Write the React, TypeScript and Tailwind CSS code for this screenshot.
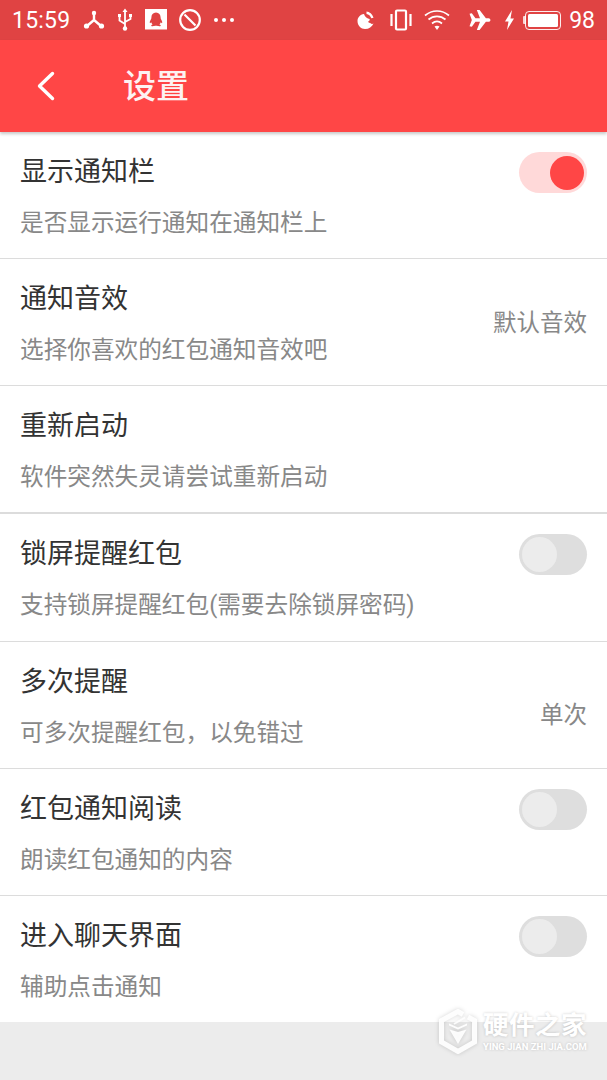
const FONT = "font-['Roboto','Noto_Sans_CJK_SC',sans-serif]";

function Toggle({ on }: { on?: boolean }) {
  if (on) {
    return (
      <div className="w-[68px] h-[41px] rounded-full bg-[#ffd9d9] flex items-center justify-end pr-[3px] shrink-0">
        <div className="size-[34px] rounded-full bg-[#ff4646]" />
      </div>
    );
  }
  return (
    <div className="w-[68px] h-[41px] rounded-full bg-[#dedede] flex items-center pl-[3px] shrink-0">
      <div className="size-[35px] rounded-full bg-[#ececec]" />
    </div>
  );
}

function SettingRow({
  title,
  desc,
  toggle,
  value,
  valueClass,
  tall,
  heavy,
  last,
}: {
  title: string;
  desc: string;
  toggle?: "on" | "off";
  value?: string;
  valueClass?: string;
  tall?: boolean;
  heavy?: boolean;
  last?: boolean;
}) {
  return (
    <div
      className={`relative pl-5 pr-5 ${last ? "h-[126px]" : tall ? "h-[128px]" : "h-[127px]"} ${
        last ? "" : heavy ? "border-b-2 border-[#dcdcdc]" : "border-b border-[#dcdcdc]"
      }`}
    >
      <p className="pt-[21px] text-[27px] leading-[38px] text-[#333333]">{title}</p>
      <p className="pt-[15px] text-[23.65px] leading-[34px] text-[#888888]">{desc}</p>
      {toggle && (
        <div className="absolute right-5 top-[20px]">
          <Toggle on={toggle === "on"} />
        </div>
      )}
      {value && (
        <span className={`absolute right-5 text-[23.5px] leading-[34px] text-[#888888] ${valueClass}`}>
          {value}
        </span>
      )}
    </div>
  );
}

function StatusBar() {
  return (
    <div className="h-10 bg-[#e04343] flex items-center justify-between pl-3 pr-3 text-white">
      <div className="flex items-center">
        <span className="text-[23px] leading-none tracking-[0.2px] font-['Roboto',sans-serif]">15:59</span>
        {/* hotspot tree */}
        <svg width="22" height="22" viewBox="0 0 22 22" className="ml-[13px]" fill="none" stroke="white" strokeWidth="2.4">
          <path d="M11 4v8M11 11l-7 6M11 11l7 6" />
          <circle cx="11" cy="4" r="2.2" fill="white" stroke="none" />
          <circle cx="3.5" cy="17" r="2.6" fill="white" stroke="none" />
          <circle cx="18.5" cy="17" r="2.6" fill="white" stroke="none" />
        </svg>
        {/* usb */}
        <svg width="16" height="24" viewBox="0 0 16 24" className="ml-[12px]" fill="none" stroke="white" strokeWidth="1.8">
          <path d="M8 3v19M2.5 8v4.5L8 16M13.5 8v3L8 14" />
          <path d="M8 0.5l2.5 3.5h-5z" fill="white" stroke="none" />
          <circle cx="8" cy="20.5" r="2.2" fill="white" stroke="none" />
          <rect x="1" y="6" width="3" height="3" fill="white" stroke="none" />
          <rect x="12" y="6" width="3" height="3" fill="white" stroke="none" />
        </svg>
        {/* qq */}
        <svg width="22" height="22" viewBox="0 0 22 22" className="ml-[12px]">
          <path
            fillRule="evenodd"
            fill="white"
            d="M0 0h22v20.5H0zM11 3.500c-3 0-4.600 2.200-4.600 5 0 .9-.2 1.500-.7 2.300-.7 1.200-1.200 2.600-.8 3.200.3.4.9-.1 1.300-.7.300 1 .8 1.700 1.400 2.200-.9.300-1.500.7-1.300 1.200.2.500 1.600.6 2.800.4.700-.1 1.200-.3 1.900-.3s1.200.2 1.900.3c1.200.2 2.600.1 2.800-.4.2-.5-.4-.9-1.300-1.200.6-.5 1.100-1.200 1.400-2.200.4.600 1 1.100 1.300.7.400-.6-.1-2-.8-3.200-.5-.8-.7-1.400-.7-2.300 0-2.800-1.600-5-4.600-5z"
          />
        </svg>
        {/* do not disturb */}
        <svg width="24" height="24" viewBox="0 0 24 24" className="ml-[11px]" fill="none" stroke="white" strokeWidth="2.2">
          <circle cx="12" cy="12" r="9.8" />
          <path d="M6.500 6.500l11 11" />
        </svg>
        {/* more */}
        <div className="ml-[12px] flex gap-[4px]">
          <div className="size-[4px] rounded-full bg-white" />
          <div className="size-[4px] rounded-full bg-white" />
          <div className="size-[4px] rounded-full bg-white" />
        </div>
      </div>
      <div className="flex items-center">
        {/* moon-like badge */}
        <svg width="20" height="20" viewBox="0 0 20 20">
          <path
            fill="white"
            d="M8 4C4 4.500 1.500 7.500 1.500 11c0 4.500 3.500 8 7.500 8 4 0 7-2 8.500-5.500-1 .7-2.500.5-3.200-.6-1 .2-2.100-.4-2.300-1.400 1.300-.2 2-1.300 1.600-2.500C11.500 8.800 8.800 7 8 4zM10.500 1.500c3 .2 6 2.700 7 6.200l-2.200.5c-.7-2.400-2.700-4-4.800-4.300z"
          />
        </svg>
        {/* vibrate */}
        <svg width="22" height="24" viewBox="0 0 22 24" className="ml-[14px]" fill="none" stroke="white" strokeWidth="2.2">
          <rect x="6" y="2.500" width="10" height="19" rx="1" />
          <path d="M1.500 6v12M20.500 6v12" />
        </svg>
        {/* wifi */}
        <svg width="26" height="22" viewBox="0 0 26 22" className="ml-[12px]" fill="none" stroke="white" strokeWidth="1.7">
          <path d="M1 6.500C8 .5 18 .5 25 6.500M4.500 10.500c5-4.300 12-4.300 17 0M8 14.500c3-2.500 7-2.500 10 0" />
          <path d="M10.500 17.500c1.500-1 3.500-1 5 0L13 21z" fill="white" stroke="none" />
        </svg>
        {/* airplane */}
        <svg width="24" height="20" viewBox="0 0 24 22" className="ml-[18px]">
          <path
            fill="white"
            d="M0.500 4l2.500-.5 4 5.500h5L8.500 0h3l7 9h3c1 0 2 1 2 2s-1 2-2 2h-3l-7 9h-3l3.500-9H7l-4 5.500L.5 18 3 11z"
          />
        </svg>
        {/* charging bolt */}
        <svg width="11" height="20" viewBox="0 0 11 20" className="ml-[12px]">
          <path fill="white" d="M8 0L1 11.500h3.500L3 20l7-11.500H6.500z" />
        </svg>
        {/* battery */}
        <div className="ml-[8px] flex items-center">
          <div className="w-[3px] h-[8px] bg-white rounded-l-[1px] opacity-80" />
          <div className="w-[36px] h-[19px] rounded-[4px] border-[1.5px] border-white/90 p-[2px] ml-[-1px]">
            <div className="size-full rounded-[1.5px] bg-white" />
          </div>
        </div>
        <span className="ml-[8px] text-[23px] leading-none font-['Roboto',sans-serif]">98</span>
      </div>
    </div>
  );
}

export default function App() {
  return (
    <div className={`relative w-[607px] h-[1080px] overflow-hidden bg-[#ececec] ${FONT}`}>
      <StatusBar />
      <div className="relative z-10 h-[92px] bg-[#ff4646] flex items-center shadow-[0_2px_3px_rgba(0,0,0,0.22)]">
        <svg width="20" height="32" viewBox="0 0 20 32" className="ml-[36px]" fill="none" stroke="white" strokeWidth="3.4" strokeLinecap="round" strokeLinejoin="round">
          <path d="M16.500 3.500L3.500 16l13 12.500" />
        </svg>
        <h1 className="ml-[67px] text-[33px] leading-none font-medium text-[#fdf2f2]">设置</h1>
      </div>
      <div className="bg-white">
        <SettingRow title="显示通知栏" desc="是否显示运行通知在通知栏上" toggle="on" />
        <SettingRow title="通知音效" desc="选择你喜欢的红包通知音效吧" value="默认音效" valueClass="top-[47px]" />
        <SettingRow title="重新启动" desc="软件突然失灵请尝试重新启动" tall heavy />
        <SettingRow title="锁屏提醒红包" desc="支持锁屏提醒红包(需要去除锁屏密码)" toggle="off" tall />
        <SettingRow title="多次提醒" desc="可多次提醒红包，以免错过" value="单次" valueClass="top-[56px]" />
        <SettingRow title="红包通知阅读" desc="朗读红包通知的内容" toggle="off" />
        <SettingRow title="进入聊天界面" desc="辅助点击通知" toggle="off" last />
      </div>
      {/* watermark */}
      <div className="absolute left-[439px] top-[1009px] flex items-center gap-[6px] text-white [text-shadow:0_0_3px_rgba(0,0,0,0.2)]">
        <svg width="38" height="45" viewBox="0 0 38 45" fill="none" className="drop-shadow-[0_0_2px_rgba(0,0,0,0.18)]">
          <path d="M29 8L35.500 11.500V33L19 42.500L2.500 33V11.500L19 2.500L24 5.500" stroke="white" strokeOpacity="0.92" strokeWidth="5" />
          <path d="M26 8.500L15 15" stroke="white" strokeOpacity="0.85" strokeWidth="2" />
          <path d="M10 14.500L19 18.500L28 14.500V16.500L19 20.500L10 16.500Z" fill="white" fillOpacity="0.92" />
          <path d="M10.500 20.500L19 23L27.500 20.500L19 35Z" fill="white" fillOpacity="0.92" />
        </svg>
        <div className="flex flex-col">
          <span className="text-[25.5px] leading-[30px] tracking-[0.5px] font-bold">硬件之家</span>
          <span className="text-[9.5px] leading-[13px] font-bold whitespace-nowrap font-['Roboto',sans-serif]">YING JIAN ZHI JIA.COM</span>
        </div>
      </div>
    </div>
  );
}
